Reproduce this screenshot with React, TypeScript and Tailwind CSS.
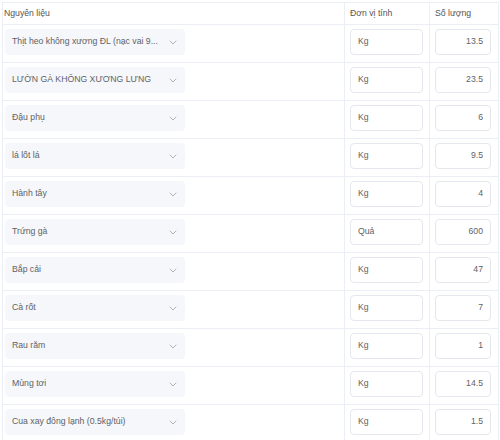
const items = [
  { name: "Thịt heo không xương ĐL (nạc vai 9...", unit: "Kg", qty: "13.5" },
  { name: "LƯỜN GÀ KHÔNG XƯƠNG LƯNG", unit: "Kg", qty: "23.5" },
  { name: "Đậu phụ", unit: "Kg", qty: "6" },
  { name: "lá lốt lá", unit: "Kg", qty: "9.5" },
  { name: "Hành tây", unit: "Kg", qty: "4" },
  { name: "Trứng gà", unit: "Quả", qty: "600" },
  { name: "Bắp cải", unit: "Kg", qty: "47" },
  { name: "Cà rốt", unit: "Kg", qty: "7" },
  { name: "Rau răm", unit: "Kg", qty: "1" },
  { name: "Mùng tơi", unit: "Kg", qty: "14.5" },
  { name: "Cua xay đông lạnh (0.5kg/túi)", unit: "Kg", qty: "1.5" },
];

function Chevron() {
  return (
    <svg width="8" height="5" viewBox="0 0 8 5" fill="none" className="shrink-0">
      <path d="M1 1l3 3 3-3" stroke="#adb1b9" strokeWidth="1" strokeLinecap="round" strokeLinejoin="round" />
    </svg>
  );
}

export default function App() {
  return (
    <div
      className="w-[500px] h-[440px] overflow-hidden bg-white pl-[2px] pt-[2px] text-[8.7px] text-[#606266]"
      style={{ fontFamily: '"Liberation Sans", Arial, sans-serif' }}
    >
      <div className="w-[497px] border-l border-r border-t border-[#ebeef5]">
        {/* header */}
        <div className="grid grid-cols-[342px_85px_68px] h-[22px] border-b border-[#ebeef5] divide-x divide-[#ebeef5] text-[#555]">
          <div className="flex items-center pl-[1px]">Nguyên liệu</div>
          <div className="flex items-center pl-[5px]">Đơn vị tính</div>
          <div className="flex items-center pl-[5px]">Số lượng</div>
        </div>

        {items.map((it) => (
          <div
            key={it.name}
            className="grid grid-cols-[342px_85px_68px] h-[38px] border-b border-[#ebeef5] divide-x divide-[#ebeef5]"
          >
            <div className="pl-[2px] pt-[4px]">
              <div className="flex items-center w-[180px] h-[26px] rounded-[4px] bg-[#f5f7fa] pl-[7px] pr-[8px]">
                <span className="flex-1 whitespace-nowrap">{it.name}</span>
                <Chevron />
              </div>
            </div>
            <div className="pl-[5px] pt-[4px]">
              <div className="flex items-center w-[73px] h-[26px] rounded-[4px] border border-[#e4e7ed] pl-[7px]">
                {it.unit}
              </div>
            </div>
            <div className="pl-[5px] pt-[4px]">
              <div className="flex items-center justify-end w-[56px] h-[26px] rounded-[4px] border border-[#e4e7ed] pr-[7px]">
                {it.qty}
              </div>
            </div>
          </div>
        ))}
      </div>
    </div>
  );
}
